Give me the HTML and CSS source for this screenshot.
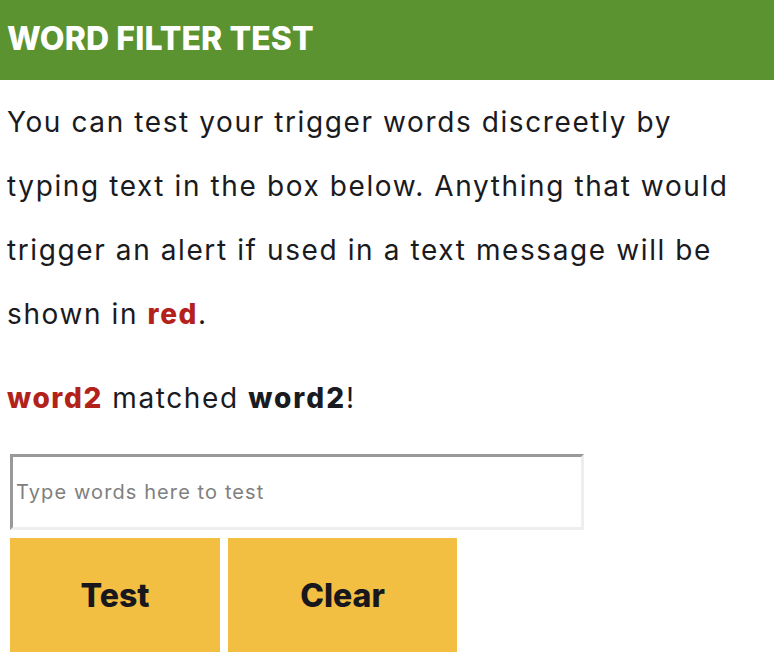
FILE: index.html
```html
<!DOCTYPE html>
<html lang="en">
<head>
    <meta charset="UTF-8">
    <meta name="viewport" content="width=device-width, initial-scale=1.0">
    <title>Word Filter Test</title>
    <link rel="stylesheet" href="styles.css">
</head>
<body>

    <div class="filter-header">
        <h1>WORD FILTER TEST</h1>
    </div>

    <div class="filter-body">
        <p class="intro">You can test your trigger words discreetly by typing text in the box below. Anything that would trigger an alert if used in a text message will be shown in <span class="hit">red</span>.</p>

        <p class="result"><span class="hit">word2</span> matched <strong>word2</strong>!</p>

        <form class="test-form">
            <input type="text" class="test-input" placeholder="Type words here to test">
            <div class="btn-row">
                <button type="button" class="test-btn btn-test">Test</button>
                <button type="button" class="test-btn btn-clear">Clear</button>
            </div>
        </form>
    </div>

</body>
</html>
```

FILE: styles.css
```css
body {
    margin: 0;
    font-family: Inter, "Liberation Sans", sans-serif;
    color: #1a1a21;
    background: #fff;
}

.filter-header {
    background-color: #5a9330;
    height: 80px;
    display: flex;
    align-items: center;
    padding: 0 7px;
}

.filter-header h1 {
    margin: -3px 0 0;
    color: #fff;
    font-size: 32px;
    font-weight: 800;
    letter-spacing: 0.1px;
}

.filter-body {
    padding: 10px 7px 0;
}

.intro, .result {
    margin: 0;
    font-size: 28px;
    line-height: 64px;
    letter-spacing: 1.6px;
}

.intro {
    max-width: 745px;
}

.result {
    margin-top: 20px;
}

.hit {
    color: #b3221a;
    font-weight: 800;
}

.result strong {
    font-weight: 800;
    letter-spacing: 2px;
}

.test-form {
    margin-top: 24px;
    padding-left: 3px;
}

.test-input {
    display: block;
    box-sizing: border-box;
    width: 574px;
    height: 76px;
    border: 3px solid;
    border-color: #999 #eee #eee #999;
    padding: 0 3px;
    font-family: Inter, sans-serif;
    font-size: 20px;
    letter-spacing: 1.1px;
    color: #333;
    outline: none;
}

.test-input::placeholder {
    color: #808080;
}

.btn-row {
    display: flex;
    gap: 8px;
    margin-top: 8px;
}

.test-btn {
    height: 114px;
    border: none;
    background-color: #f2bf43;
    color: #17171d;
    font-family: Inter, sans-serif;
    font-size: 32px;
    font-weight: 800;
    cursor: pointer;
}

.btn-test {
    width: 210px;
}

.btn-clear {
    width: 229px;
}
```
